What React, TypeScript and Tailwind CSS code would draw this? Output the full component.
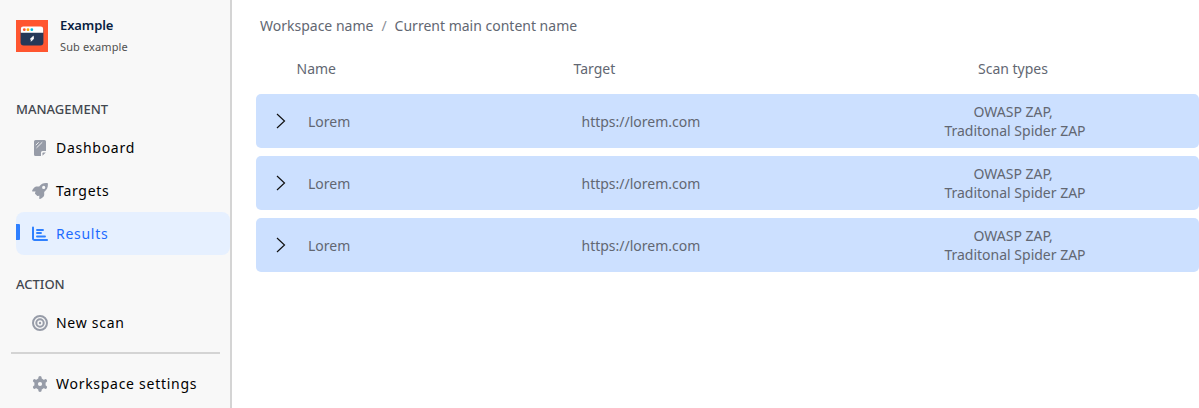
import React from "react";

function Logo() {
  return (
    <svg viewBox="0 0 32 32" className="h-8 w-8 shrink-0">
      <rect width="32" height="32" fill="#ff5630" />
      <rect x="4.600" y="7" width="22.800" height="18.400" rx="3" fill="#253858" />
      <path d="M7.200 6.500h17.600a2.400 2.400 0 0 1 2.400 2.400V12.700H4.800V8.900A2.400 2.400 0 0 1 7.200 6.500Z" fill="#fff" />
      <circle cx="8.300" cy="9.700" r="1.400" fill="#ff5630" />
      <circle cx="12" cy="9.700" r="1.400" fill="#ffab00" />
      <circle cx="15.800" cy="9.700" r="1.400" fill="#00b8d9" />
      <path d="M17.300 16.300l-3 2.800 1.500.4-.9 1.700 2.500-2.100V16.300Z" fill="#fff" stroke="#fff" strokeWidth=".8" />
    </svg>
  );
}

function DashboardIcon() {
  return (
    <svg viewBox="0 0 16 16" className="h-4 w-4" fill="none">
      <path d="M3.500 0h9A1.500 1.500 0 0 1 14 1.500V11h-3.500A1.500 1.500 0 0 0 9 12.500V16H3.500A1.500 1.500 0 0 1 2 14.500v-13A1.500 1.500 0 0 1 3.500 0Z" fill="#979ca8" />
      <path d="M10.500 15.800v-2.500a.8.8 0 0 1 .8-.8h2.500Z" fill="#979ca8" />
      <path d="M3.800 5.200l2.900-2.900M4.500 7.900l5.800-5.700" stroke="#f8f8f8" strokeWidth=".9" />
    </svg>
  );
}

function RocketIcon() {
  return (
    <svg viewBox="0 0 16 16" className="h-4 w-4" fill="#979ca8">
      <path
        fillRule="evenodd"
        d="M15.200.1C11.700-.2 9.200.8 7.200 3.500H4.200C2.500 3.500 1 5.800.1 7.700c-.2.5.1.8.5.8h3l-.5 1.300c-.2.5-.1.9.2 1.200l1.800 1.800c.3.300.7.4 1.200.2l1-.4v2.800c0 .5.4.8.8.5 1.900-.9 4.100-2.300 4.100-4V8.900c2.800-2 3.900-4.600 3.700-8.100 0-.4-.3-.7-.7-.7ZM11.700 2.800a1.600 1.600 0 1 1 0 3.200 1.600 1.600 0 0 1 0-3.200Z"
      />
    </svg>
  );
}

function ResultsIcon() {
  return (
    <svg viewBox="0 0 16 16" className="h-4 w-4" fill="none" stroke="#2f80ff" strokeLinecap="round">
      <path d="M1 1.500v11a1.500 1.500 0 0 0 1.500 1.500h12.600" strokeWidth="2" />
      <path d="M5 4h6M5 7h4M5 10.500h8" strokeWidth="1.900" />
    </svg>
  );
}

function ScanIcon() {
  return (
    <svg viewBox="0 0 16 16" className="h-4 w-4" fill="none" stroke="#979ca8">
      <circle cx="8" cy="8" r="7" strokeWidth="2" />
      <circle cx="8" cy="8" r="3.700" strokeWidth="2" />
      <circle cx="8" cy="8" r="1.200" fill="#979ca8" stroke="none" />
    </svg>
  );
}

function SettingsIcon() {
  return (
    <svg viewBox="0 0 16 16" className="h-4 w-4" fill="none">
      <circle cx="8" cy="8" r="5.700" fill="#979ca8" />
      <path d="M8 1.800v12.400M2.630 4.900l10.740 6.200M13.370 4.900L2.630 11.100" stroke="#979ca8" strokeWidth="3.400" strokeLinecap="round" />
      <circle cx="8" cy="8" r="2.100" fill="#f8f8f8" />
    </svg>
  );
}

function NavItem({ icon, label, active = false }: { icon: React.ReactNode; label: string; active?: boolean }) {
  return (
    <div className={`ml-4 flex h-[43px] items-center rounded-lg ${active ? "bg-[#e6f0ff] text-[#1d6bff]" : "text-black"}`}>
      <span className={`-mt-[3px] h-4 w-1 rounded-r-[1px] ${active ? "bg-[#2f80ff]" : ""}`} />
      <span className="ml-3 w-4">{icon}</span>
      <span className="ml-2 text-sm tracking-[0.72px] whitespace-nowrap">{label}</span>
    </div>
  );
}

function ScanRow() {
  return (
    <div className="flex h-[54px] items-center rounded-[5px] bg-[#cce0ff]">
      <svg viewBox="0 0 16 16" className="ml-4 h-4 w-4" fill="none" stroke="#111" strokeWidth="1.200">
        <path d="M5 1l7.500 7L5 15" />
      </svg>
      <span className="ml-5 w-[273px] pt-[2px]">Lorem</span>
      <span className="w-[304px] pt-[2px] pl-[0.500px]">https://lorem.com</span>
      <span className="w-[260px] text-center leading-[19px]">
        OWASP ZAP,&nbsp;
        <br />
        Traditonal Spider ZAP
      </span>
    </div>
  );
}

export default function App() {
  return (
    <div className="flex h-[408px] overflow-hidden bg-white font-['Noto_Sans',sans-serif]">
      <aside className="w-[232px] shrink-0 border-r-2 border-[#d4d4d4] bg-[#f8f8f8]">
        <header className="flex h-[88px] gap-3 pt-5 pl-4">
          <Logo />
          <div className="-mt-1">
            <div className="text-[13px] leading-[18px] font-semibold tracking-[-0.1px] text-[#091e42]">Example</div>
            <div className="mt-[5px] text-[11px] leading-4 tracking-[0.12px] text-[#505050]">Sub example</div>
          </div>
        </header>
        <h2 className="flex h-[38px] items-center pt-[5px] pl-4 text-[13px] font-medium text-[#42474f]">MANAGEMENT</h2>
        <nav>
          <NavItem icon={<DashboardIcon />} label="Dashboard" />
          <NavItem icon={<RocketIcon />} label="Targets" />
          <NavItem icon={<ResultsIcon />} label="Results" active />
        </nav>
        <h2 className="flex h-[46px] items-center pt-[13px] pl-4 text-[13px] font-medium text-[#42474f]">ACTION</h2>
        <NavItem icon={<ScanIcon />} label="New scan" />
        <div className="mt-2 mr-[10px] ml-[11px] h-[2px] bg-[#d4d4d4]" />
        <div className="mt-2">
          <NavItem icon={<SettingsIcon />} label="Workspace settings" />
        </div>
      </aside>
      <main className="min-w-0 flex-1 pt-4 pl-6 text-sm text-[#626772]">
        <nav className="flex h-[19px] items-center gap-2 pl-1">
          <span>Workspace name</span>
          <span className="text-[#8b8f98]">/</span>
          <span>Current main content name</span>
        </nav>
        <div className="mt-6 flex h-[19px] items-center pl-[40.500px]">
          <span className="w-[277px]">Name</span>
          <span className="w-[309.500px]">Target</span>
          <span className="w-[260px] text-center">Scan types</span>
        </div>
        <div className="mt-4 flex flex-col gap-2">
          <ScanRow />
          <ScanRow />
          <ScanRow />
        </div>
      </main>
    </div>
  );
}
